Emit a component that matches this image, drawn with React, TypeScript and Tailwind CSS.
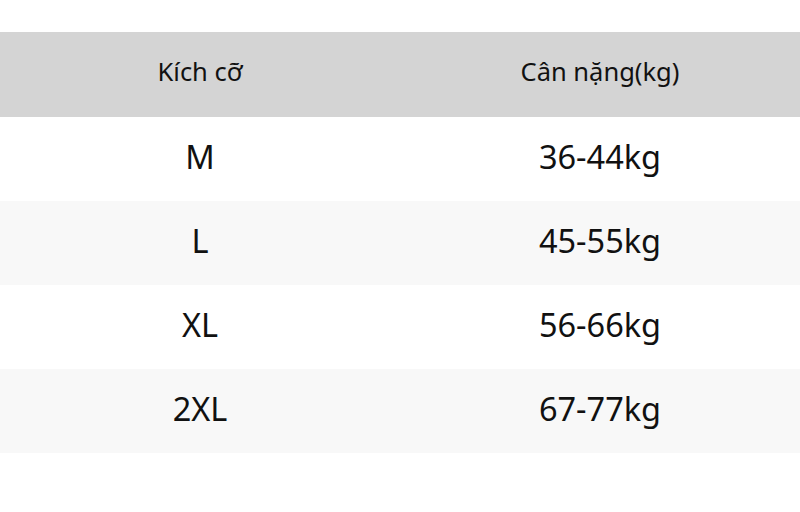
const rows = [
  { size: "M", weight: "36-44kg" },
  { size: "L", weight: "45-55kg" },
  { size: "XL", weight: "56-66kg" },
  { size: "2XL", weight: "67-77kg" },
];

export default function App() {
  return (
    <div className="w-[800px] h-[512px] bg-white pt-[32px] text-[#111] font-['Noto_Sans',sans-serif]">
      <div className="grid grid-cols-2 h-[85px] bg-[#d4d4d4] text-[25.5px] leading-none">
        <div className="flex items-center justify-center pb-[6px]">Kích cỡ</div>
        <div className="flex items-center justify-center pb-[6px]">Cân nặng(kg)</div>
      </div>
      {rows.map((r, i) => (
        <div
          key={r.size}
          className={`grid grid-cols-2 h-[84px] text-[32.5px] leading-none ${i % 2 === 1 ? "bg-[#f8f8f8]" : "bg-white"}`}
        >
          <div className="flex items-center justify-center pb-[4px]">{r.size}</div>
          <div className="flex items-center justify-center pb-[4px]">{r.weight}</div>
        </div>
      ))}
    </div>
  );
}
